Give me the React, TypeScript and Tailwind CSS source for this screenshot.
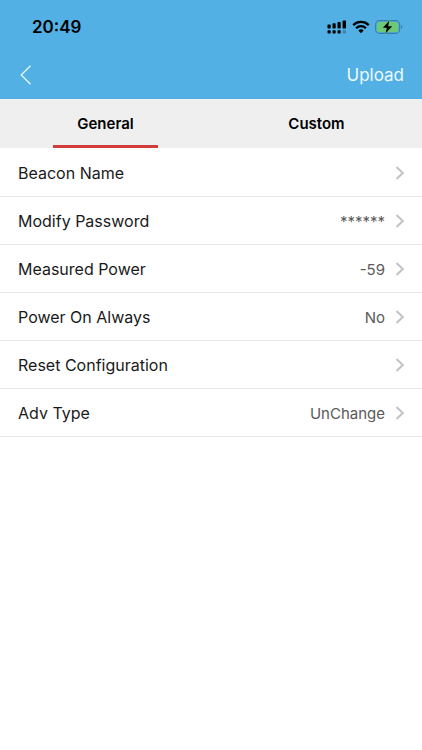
type Setting = { label: string; value?: string };

const settings: Setting[] = [
  { label: "Beacon Name" },
  { label: "Modify Password", value: "******" },
  { label: "Measured Power", value: "-59" },
  { label: "Power On Always", value: "No" },
  { label: "Reset Configuration" },
  { label: "Adv Type", value: "UnChange" },
];

function SignalIcon() {
  return (
    <svg width="20" height="16" viewBox="0 0 20 16" aria-hidden="true">
      <rect x="0.5" y="5.5" width="3.2" height="4" rx="0.8" />
      <rect x="5.5" y="4.3" width="3.2" height="5.2" rx="0.8" />
      <rect x="10.5" y="3" width="3.2" height="6.5" rx="0.8" />
      <rect x="15.6" y="1.5" width="3.4" height="8" rx="0.8" />
      <rect x="0.5" y="11.2" width="3.2" height="3.4" rx="0.8" />
      <rect x="5.5" y="11.2" width="3.2" height="3.4" rx="0.8" />
      <rect x="10.5" y="11.2" width="3.2" height="3.4" rx="0.8" />
      <rect x="15.6" y="11.2" width="3.4" height="3.4" rx="0.8" opacity="0.25" />
    </svg>
  );
}

function WifiIcon() {
  return (
    <svg width="18" height="14" viewBox="0 0 18 14" fill="none" stroke="#000" aria-hidden="true">
      <path d="M1.2 5.1a11.2 11.2 0 0 1 15.6 0" strokeWidth="2.3" />
      <path d="M4.1 8.2a7 7 0 0 1 9.8 0" strokeWidth="2.3" />
      <path d="M9 13.3 6.3 10.6a3.9 3.9 0 0 1 5.4 0Z" fill="#000" stroke="none" />
    </svg>
  );
}

function BatteryIcon() {
  return (
    <svg width="28" height="14" viewBox="0 0 28 14" aria-hidden="true">
      <rect x="0.6" y="0.6" width="24" height="12.8" rx="4" fill="none" stroke="#3a7ea6" strokeWidth="1.1" />
      <rect x="2" y="2" width="21.2" height="10" rx="2.6" fill="#6cc978" />
      <path d="M26 4.8c1.5.5 1.5 3.9 0 4.4Z" fill="#3a7ea6" />
      <path
        d="M14.4 0.6 7.9 7.7h3.9l-1.3 5.7 6.7-7.2h-4.1Z"
        fill="#000"
        stroke="#6cc978"
        strokeWidth="1.2"
        paintOrder="stroke"
        strokeLinejoin="round"
      />
    </svg>
  );
}

function Chevron() {
  return (
    <svg width="10" height="16" viewBox="0 0 10 16" fill="none" stroke="#c2c2c4" strokeWidth="2" aria-hidden="true">
      <path d="M1.5 2 7.8 8 1.5 14" />
    </svg>
  );
}

export default function App() {
  return (
    <main className="min-h-screen bg-white font-['Inter','Liberation_Sans',sans-serif] text-black">
      <header className="bg-[#52b0e5]">
        <div className="flex h-[50px] items-center justify-between pt-1 pr-[19px] pl-8">
          <time className="text-[17px] leading-6 font-semibold">20:49</time>
          <div className="flex items-center gap-[5px]">
            <SignalIcon />
            <WifiIcon />
            <BatteryIcon />
          </div>
        </div>
        <nav className="flex h-[49px] items-center justify-between pr-[18px] pl-5 text-[#eefaff]">
          <button type="button" aria-label="Back">
            <svg width="12" height="20" viewBox="0 0 12 20" fill="none" stroke="currentColor" strokeWidth="1.2" aria-hidden="true">
              <path d="M10.5 0.8 1.2 10l9.3 9.2" />
            </svg>
          </button>
          <button type="button" className="text-[17px] leading-6">
            Upload
          </button>
        </nav>
      </header>

      <div role="tablist" className="grid h-[49px] grid-cols-2 bg-[#efeff0]">
        <button type="button" role="tab" aria-selected="true" className="flex flex-col items-center">
          <span className="flex flex-1 items-center pt-1 text-[15px] leading-5 font-semibold">General</span>
          <span className="h-[3px] w-1/2 bg-[#d23c3a]" />
        </button>
        <button type="button" role="tab" aria-selected="false" className="flex flex-col items-center pb-[3px]">
          <span className="flex flex-1 items-center pt-1 text-[15px] leading-5 font-semibold">Custom</span>
        </button>
      </div>

      <ul className="pt-px">
        {settings.map(({ label, value }) => (
          <li key={label} className="border-b border-[#e6e6e7]">
            <button type="button" className="flex h-[47px] w-full items-center pt-px pr-[17px] pl-[18px] text-left">
              <span className="flex-1 text-[16px] leading-6 text-[#1a1a1a]">{label}</span>
              <span className="pt-0.5 pr-[10px] text-[15px] leading-5 text-[#5a5a5a]">{value}</span>
              <Chevron />
            </button>
          </li>
        ))}
      </ul>
    </main>
  );
}
